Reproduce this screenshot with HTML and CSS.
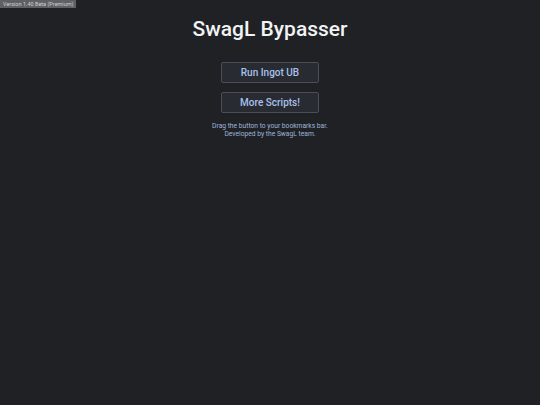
FILE: index.html
```html
<!DOCTYPE html>
<html lang="en">
<head>
  <meta charset="UTF-8">
  <meta name="viewport" content="width=device-width, initial-scale=1.0">
  <title>SwagL Bypasser</title>
  <link rel="stylesheet" href="styles.css">
</head>
<body>
  <div class="version">Version 1.40 Beta (Premium)</div>
  <div class="main">
    <h1 class="title">SwagL Bypasser</h1>
    <a class="btn" href="#">Run Ingot UB</a>
    <a class="btn" href="#">More Scripts!</a>
    <p class="info">Drag the button to your bookmarks bar.<br>Developed by the SwagL team.</p>
  </div>
</body>
</html>
```

FILE: styles.css
```css
body {
  margin: 0;
  padding: 0;
  background-color: #202124;
  font-family: Roboto, "Liberation Sans", sans-serif;
  color: #e8eaed;
  height: 405px;
}

.version {
  position: absolute;
  top: 0;
  left: 0;
  background-color: #5f6064;
  color: #d0d0d0;
  font-size: 5.5px;
  padding: 1px 3px;
  line-height: 6px;
}

.main {
  display: flex;
  flex-direction: column;
  align-items: center;
  padding-top: 16px;
}

.title {
  margin: 0 0 20px;
  font-size: 21px;
  font-weight: 500;
  line-height: 26px;
  color: #f1f3f4;
}

.btn {
  display: block;
  width: 96px;
  height: 19px;
  line-height: 19px;
  text-align: center;
  text-decoration: none;
  border: 1px solid #4a4e57;
  border-radius: 2px;
  background-color: #292b32;
  color: #a9c1ec;
  font-size: 10px;
  font-weight: 500;
  margin-bottom: 9px;
}

.info {
  margin: 0;
  font-size: 6.7px;
  line-height: 8px;
  text-align: center;
  color: #9db5de;
}
```
